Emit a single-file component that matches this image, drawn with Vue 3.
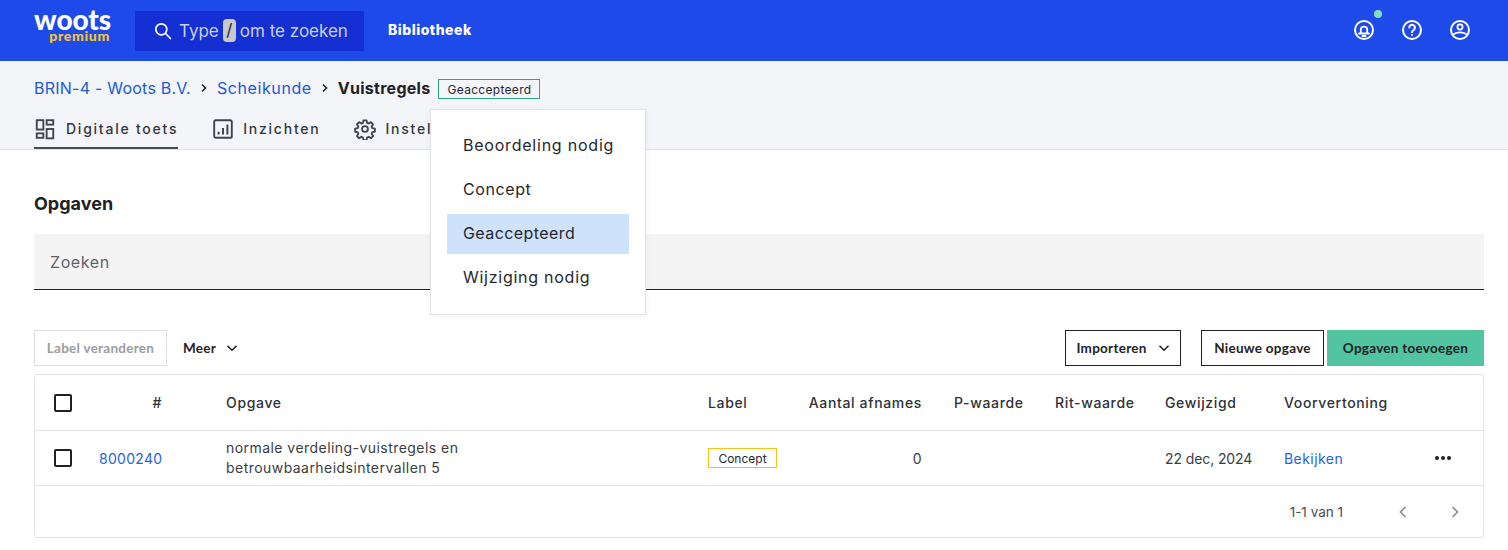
<script setup>
const options = [
  { name: 'Beoordeling nodig', active: false, spacing: '0.78px' },
  { name: 'Concept', active: false, spacing: '0.6px' },
  { name: 'Geaccepteerd', active: true, spacing: '0.43px' },
  { name: 'Wijziging nodig', active: false, spacing: '0.74px' },
]
</script>

<template>
  <div class="page">
    <header class="topbar">
      <div class="logo">
        <span class="logo-main">woots</span>
        <span class="logo-sub">premium</span>
      </div>
      <div class="search">
        <svg class="search-icon" viewBox="0 0 24 24" fill="none" stroke="#fff" stroke-width="2" stroke-linecap="round"><circle cx="10" cy="10" r="6.6"/><path d="M15 15l6 6"/></svg>
        <span>Type</span>
        <kbd class="key">/</kbd>
        <span>om te zoeken</span>
      </div>
      <a class="lib">Bibliotheek</a>
      <div class="top-icons">
        <span class="bell-wrap">
          <svg class="top-icon" viewBox="0 0 24 24" fill="none" stroke="#fff" stroke-width="2"><circle cx="12" cy="12" r="9"/><path d="M7 15.500h10M8.800 15.500v-3.700a3.200 3.200 0 0 1 6.400 0v3.700M10.500 18h3" stroke-linecap="round" stroke-linejoin="round" stroke-width="1.800"/></svg>
          <i class="dot"></i>
        </span>
        <svg class="top-icon" viewBox="0 0 24 24" fill="none" stroke="#fff" stroke-width="2"><circle cx="12" cy="12" r="9"/><path d="M9.300 9.600a2.800 2.800 0 1 1 4.300 2.400c-1 .6-1.600 1.200-1.600 2.200" stroke-linecap="round"/><circle cx="12" cy="17" r=".6" fill="#fff" stroke-width="1"/></svg>
        <svg class="top-icon" viewBox="0 0 24 24" fill="none" stroke="#fff" stroke-width="2"><circle cx="12" cy="12" r="9"/><circle cx="12" cy="9" r="2.600" stroke-width="1.700"/><path d="M5.200 16.800c1.500-1.700 4.200-2.500 6.800-2.500s5.300.8 6.800 2.500" stroke-width="1.700"/></svg>
      </div>
    </header>

    <section class="sub">
      <div class="crumbs">
        <a class="c1">BRIN-4 - Woots B.V.</a>
        <svg class="crumb-sep" viewBox="0 0 10 10" fill="none" stroke="#1f2125" stroke-width="1.6"><path d="M3 1.500 6.500 5 3 8.500"/></svg>
        <a class="c2">Scheikunde</a>
        <svg class="crumb-sep" viewBox="0 0 10 10" fill="none" stroke="#1f2125" stroke-width="1.6"><path d="M3 1.500 6.500 5 3 8.500"/></svg>
        <strong>Vuistregels</strong>
        <span class="badge badge-green">Geaccepteerd</span>
      </div>
      <nav class="tabs">
        <a class="tab tab-active">
          <svg class="tab-icon" viewBox="0 0 20 20" fill="none" stroke="#3f454d" stroke-width="1.700"><rect x="2.500" y="2" width="6" height="8.500"/><rect x="2.500" y="14" width="6" height="4"/><rect x="11.500" y="2" width="6" height="4"/><rect x="11.500" y="10" width="6" height="8.500"/></svg>
          Digitale toets
        </a>
        <a class="tab">
          <svg class="tab-icon" viewBox="0 0 20 20" fill="none" stroke="#3f454d" stroke-width="1.700"><rect x="2" y="2" width="16" height="16" rx="1.500"/><path d="M6 15v-2.500M10 15V9M14 15V6" stroke-width="1.800"/></svg>
          Inzichten
        </a>
        <a class="tab">
          <svg class="tab-icon" viewBox="0 0 24 24" fill="none" stroke="#3f454d" stroke-width="2" stroke-linejoin="round"><circle cx="12" cy="12" r="3.200"/><path d="M10.300 2.500h3.400l.5 2.800 1.800.8 2.400-1.600 2.400 2.400-1.600 2.400.8 1.800 2.800.5v3.400l-2.800.5-.8 1.800 1.600 2.400-2.400 2.400-2.400-1.600-1.800.8-.5 2.800h-3.400l-.5-2.800-1.800-.8-2.400 1.600-2.400-2.400 1.600-2.400-.8-1.800-2.800-.5v-3.400l2.800-.5.8-1.800-1.600-2.400 2.400-2.400 2.400 1.600 1.800-.8z"/></svg>
          Instellingen
        </a>
      </nav>
    </section>

    <ul class="menu">
      <li v-for="o in options" :key="o.name" :class="{ on: o.active }" :style="{ letterSpacing: o.spacing }">{{ o.name }}</li>
    </ul>

    <main class="content">
      <h2 class="title">Opgaven</h2>
      <div class="filter">Zoeken</div>

      <div class="toolbar">
        <button class="btn btn-disabled">Label veranderen</button>
        <button class="btn btn-plain">Meer
          <svg class="chev" viewBox="0 0 12 12" fill="none" stroke="#1f2125" stroke-width="1.600"><path d="M1.500 3.800 6 8.200l4.500-4.400"/></svg>
        </button>
        <span class="spacer"></span>
        <button class="btn btn-line btn-import">Importeren
          <svg class="chev" viewBox="0 0 12 12" fill="none" stroke="#1f2125" stroke-width="1.600"><path d="M1.500 3.800 6 8.200l4.500-4.400"/></svg>
        </button>
        <button class="btn btn-line btn-new">Nieuwe opgave</button>
        <button class="btn btn-green">Opgaven toevoegen</button>
      </div>

      <div class="table">
        <div class="row row-head">
          <span class="box"></span>
          <span class="right">#</span>
          <span class="c-opgave">Opgave</span>
          <span>Label</span>
          <span class="right aantal">Aantal afnames</span>
          <span>P-waarde</span>
          <span>Rit-waarde</span>
          <span>Gewijzigd</span>
          <span>Voorvertoning</span>
          <span></span>
        </div>
        <div class="row row-body">
          <span class="box"></span>
          <a class="link num">8000240</a>
          <span class="c-opgave wrap">normale verdeling-vuistregels en<br>betrouwbaarheidsintervallen 5</span>
          <span><span class="badge badge-yellow">Concept</span></span>
          <span class="right aantal">0</span>
          <span></span>
          <span></span>
          <span class="date">22 dec, 2024</span>
          <a class="link">Bekijken</a>
          <span class="dots"><i></i><i></i><i></i></span>
        </div>
        <div class="foot">
          <span>1-1 van 1</span>
          <svg class="page-chev first" viewBox="0 0 12 14" fill="none" stroke="#8a8f96" stroke-width="1.700"><path d="M8.500 2 3.500 7l5 5"/></svg>
          <svg class="page-chev" viewBox="0 0 12 14" fill="none" stroke="#8a8f96" stroke-width="1.700"><path d="M3.500 2l5 5-5 5"/></svg>
        </div>
      </div>
    </main>
  </div>
</template>

<style scoped>
.page {
  position: relative;
  width: 1508px;
  height: 550px;
  overflow: hidden;
  background: #fff;
  color: #26282c;
  font-family: Inter, "Open Sans", sans-serif;
  font-size: 14px;
}
a { text-decoration: none; }

.topbar {
  height: 61px;
  background: #1f4aea;
  display: flex;
  align-items: center;
  padding: 0 34px;
  box-sizing: border-box;
}
.logo {
  width: 77px;
  margin-right: 24px;
  margin-bottom: 8px;
  display: flex;
  flex-direction: column;
  align-items: flex-end;
  font-family: Lato, sans-serif;
  font-weight: 900;
  line-height: 1;
}
.logo-main { color: #fff; font-size: 28px; line-height: 22px; letter-spacing: -0.1px; margin-top: -4px; }
.logo-sub { color: #f7c71f; font-size: 14px; line-height: 13px; letter-spacing: 0.7px; margin-top: -1px; margin-right: 1px; }
.search {
  width: 229px;
  height: 40px;
  background: #1530d2;
  display: flex;
  align-items: center;
  color: #c8cfe6;
  font-size: 17px;
  box-sizing: border-box;
  padding-left: 18px;
}
.search-icon { width: 20px; height: 20px; margin-right: 6px; }
.key {
  width: 13px;
  height: 23px;
  margin: 0 4px;
  border-radius: 4px;
  background: #c9c9cc;
  color: #26282c;
  font-family: Inter, sans-serif;
  font-size: 17px;
  line-height: 23px;
  text-align: center;
}
.lib {
  margin-left: 24px;
  margin-top: -2px;
  color: #fff;
  font-weight: 800;
  font-size: 14px;
  letter-spacing: 0.5px;
}
.top-icons {
  margin-left: auto;
  display: flex;
  align-items: center;
  gap: 24px;
  margin-right: 2px;
  margin-top: -2px;
}
.top-icon { width: 24px; height: 24px; display: block; }
.bell-wrap { position: relative; display: block; }
.dot {
  position: absolute;
  left: 22px;
  top: -8px;
  width: 8px;
  height: 8px;
  border-radius: 50%;
  background: #7fdfc0;
}

.sub {
  height: 89px;
  box-sizing: border-box;
  background: #f4f5f9;
  border-bottom: 1px solid #e2e3e6;
  padding: 0 34px;
  display: flex;
  flex-direction: column;
  justify-content: space-between;
}
.crumbs {
  display: flex;
  align-items: center;
  height: 20px;
  margin-top: 17px;
  font-size: 16px;
}
.crumbs a { color: #1a5ad8; }
.c1 { letter-spacing: 0.23px; }
.c2 { letter-spacing: 0.6px; }
.crumbs strong { font-weight: 700; color: #1f2125; letter-spacing: 0.27px; }
.crumb-sep { width: 10px; height: 10px; margin: 0 8px; }
.badge {
  display: inline-flex;
  align-items: center;
  justify-content: center;
  height: 20px;
  box-sizing: border-box;
  font-size: 12px;
  letter-spacing: 0.3px;
  color: #26282c;
  border: 1px solid;
}
.badge-green { width: 102px; margin-left: 8px; margin-top: 2px; border-color: #2aa983; }
.badge-yellow { width: 69px; border-color: #f5c518; letter-spacing: 0; }
.tabs { display: flex; gap: 34px; height: 42px; }
.tab {
  display: flex;
  align-items: center;
  gap: 9px;
  padding-top: 1px;
  box-sizing: border-box;
  height: 42px;
  color: #33373d;
  font-size: 14px;
  font-weight: 500;
  letter-spacing: 1.760px;
}
.tab-active { gap: 10px; box-shadow: inset 0 -2px 0 #474d55; }
.tab-icon { width: 22px; height: 22px; }

.menu {
  position: absolute;
  left: 430px;
  top: 109px;
  width: 216px;
  height: 206px;
  box-sizing: border-box;
  margin: 0;
  padding: 16px;
  list-style: none;
  display: flex;
  flex-direction: column;
  gap: 4px;
  background: #fff;
  border: 1px solid #e3e4e6;
  box-shadow: 0 2px 6px rgba(0, 0, 0, 0.06);
}
.menu li {
  height: 40px;
  line-height: 38px;
  padding-left: 16px;
  font-size: 16px;
  color: #26282c;
}
.menu li.on { background: #cfe2fc; }

.content { padding: 0 24px 0 34px; }
.title {
  margin: 44px 0 0;
  font-size: 18px;
  line-height: 20px;
  font-weight: 700;
  color: #1f2125;
}
.filter {
  margin-top: 20px;
  height: 56px;
  box-sizing: border-box;
  background: #f4f4f4;
  border-bottom: 1px solid #1f2125;
  padding-left: 16px;
  line-height: 56px;
  font-size: 16px;
  letter-spacing: 0.6px;
  color: #5f6369;
}
.toolbar { margin-top: 40px; display: flex; align-items: center; height: 36px; }
.spacer { flex: 1; }
.btn {
  height: 36px;
  box-sizing: border-box;
  background: transparent;
  border: 1px solid transparent;
  font-family: Lato, sans-serif;
  font-size: 13.500px;
  font-weight: 700;
  color: #1f2125;
  padding: 0;
  letter-spacing: 0.27px;
  display: flex;
  align-items: center;
  justify-content: center;
}
.btn-disabled { width: 133px; border-color: #dedfe1; color: #9b9da0; }
.btn-plain { width: 72px; justify-content: flex-end; gap: 10px; }
.btn-line { border-color: #1f2125; }
.btn-import { width: 116px; gap: 11px; margin-right: 20px; }
.btn-new { width: 123px; margin-right: 3px; }
.btn-green { width: 157px; background: #52c4a0; }
.chev { width: 12px; height: 12px; }

.table {
  margin-top: 8px;
  height: 164px;
  box-sizing: border-box;
  border: 1px solid #e2e3e6;
  border-radius: 3px;
  font-size: 14px;
  letter-spacing: 0.45px;
}
.row {
  display: grid;
  grid-template-columns: 64px 63px 546px 100px 146px 101px 110px 119px 150px 1fr;
  align-items: center;
  border-bottom: 1px solid #e2e3e6;
  box-sizing: border-box;
}
.row-head { height: 56px; font-weight: 450; color: #2f3237; letter-spacing: 0.65px; }
.row-body { height: 55px; color: #3a3d42; }
.box {
  width: 18px;
  height: 18px;
  margin-left: 19px;
  box-sizing: border-box;
  border: 2px solid #1f2125;
  border-radius: 2px;
}
.right { text-align: right; }
.aantal { padding-right: 32px; }
.c-opgave { padding-left: 64px; }
.wrap { line-height: 20px; }
.link { color: #2563e0; }
.num { letter-spacing: 0.3px; }
.date { letter-spacing: -0.1px; }
.dots { display: flex; gap: 2px; margin-left: 1px; }
.dots i { width: 4px; height: 4px; border-radius: 50%; background: #1f2125; }
.foot {
  height: 51px;
  display: flex;
  align-items: center;
  justify-content: flex-end;
  padding-right: 22px;
  color: #4a4d52;
  font-size: 13.500px;
  letter-spacing: 0;
}
.page-chev { width: 12px; height: 14px; margin-left: 40px; }
.first { margin-left: 54px; }
</style>
